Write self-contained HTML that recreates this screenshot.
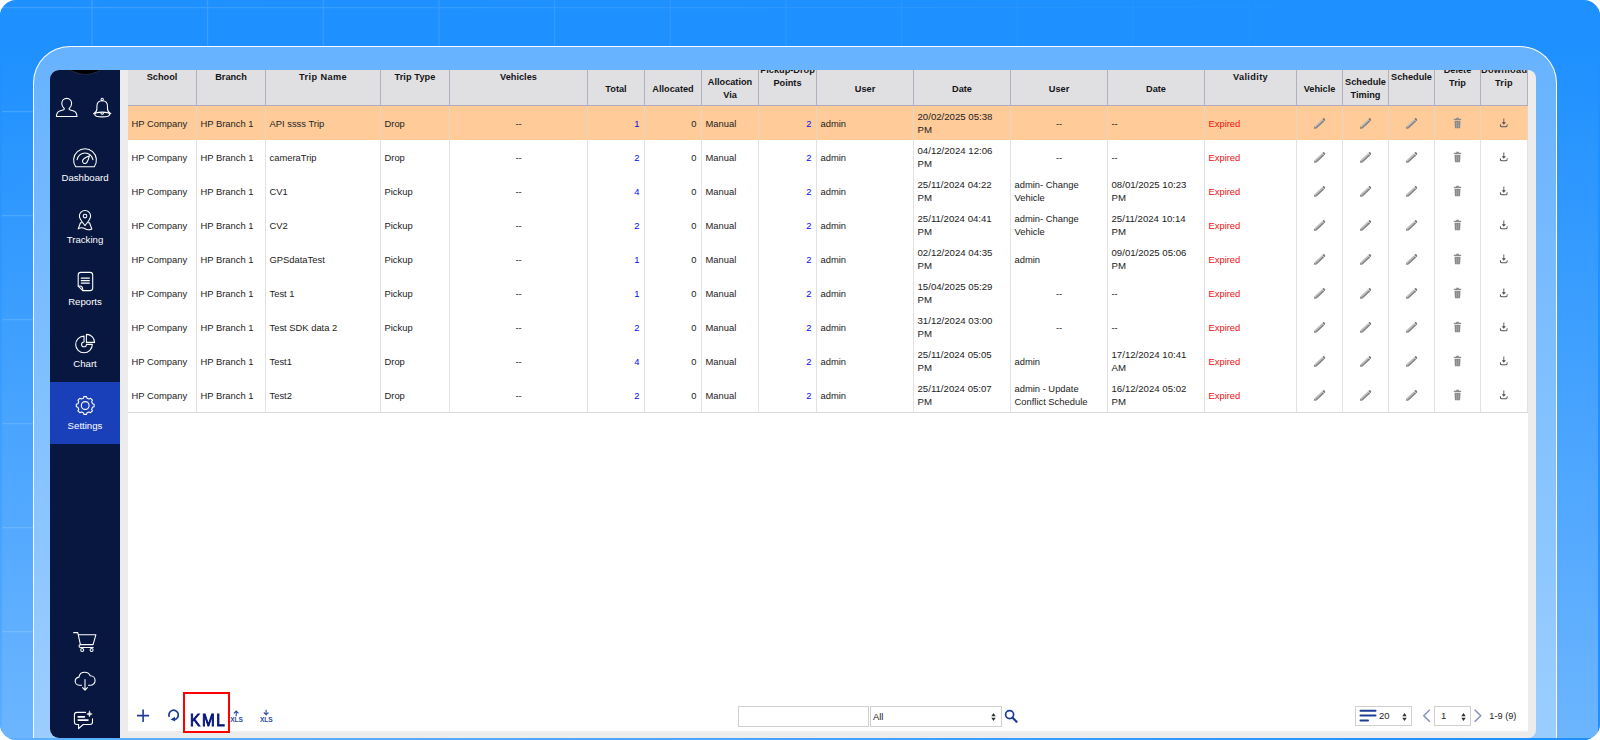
<!DOCTYPE html>
<html lang="en">
<head>
<meta charset="utf-8">
<title>Trip Settings</title>
<style>
*{box-sizing:border-box;margin:0;padding:0}
html,body{width:1600px;height:740px;overflow:hidden;background:#fff}
body{font-family:"Liberation Sans",sans-serif;position:relative;color:#222}
#bg{position:absolute;left:0;top:0;width:1600px;height:740px;border-radius:16px;overflow:hidden;
 background:linear-gradient(180deg,#1e90ff 0%,#1e90ff 6%,#6cb5ff 100%)}
#bg i{position:absolute;display:block}
#eb{left:0;bottom:0;width:1600px;height:2.2px;background:linear-gradient(90deg,#5caeff 0,#58acff 25%,#1e90ff 94%)}
#er{right:0;top:0;width:2.2px;height:740px;background:#1e90ff}
#el{left:0;top:0;width:2px;height:740px;background:linear-gradient(180deg,#1e90ff 0,#1e90ff 10%,#4ea7ff 85%,#5caeff 100%)}
#grid{position:absolute;left:0;top:0;width:1600px;height:740px;display:block;
 -webkit-mask-image:linear-gradient(90deg,#000 0,#000 6%,transparent 90%);
 mask-image:linear-gradient(90deg,#000 0,#000 6%,transparent 90%)}
#frame{position:absolute;left:32.5px;top:45.5px;width:1524px;height:692.5px;
 border:1.3px solid #fff;border-bottom:0;border-radius:37px 37px 0 0;
 background:linear-gradient(180deg,#67b2ff 0%,#9bceff 100%)}
#app{position:absolute;left:50px;top:70px;width:1485.5px;height:667.5px;border-radius:9px 8px 8px 9px;overflow:hidden;background:#ececec}
#side{position:absolute;left:0;top:0;width:70px;height:100%;background:#07173f;color:#fff}
#logo{position:absolute;left:6.5px;top:-52.600px;width:57px;height:57px;border-radius:50%;background:#000;box-shadow:0 0 0 .6px #2a3350}
.sico{position:absolute;display:block;overflow:visible}
.sico *{fill:none;stroke:#fff;stroke-width:1.08;stroke-linecap:round;stroke-linejoin:round}
.nav{position:absolute;left:0;width:70px;height:62px}
.nav.on{background:#1a40b9}
.nav span{position:absolute;left:0;width:70px;text-align:center;top:37.5px;font-size:9.65px;line-height:12px;color:#fff}
#content{position:absolute;left:78px;top:0;width:1400px;height:661px;background:#fff}
#hdr{position:absolute;left:0;top:0;width:1400px;height:36px;background:#e0e0e3;border-bottom:1px solid #adadbc;overflow:hidden}
.th{position:absolute;top:0;height:35px;border-right:1px solid #b0b0bf;font-weight:bold;font-size:9.2px;line-height:13px;text-align:center;color:#141416;white-space:nowrap}
.th span{position:absolute;left:0;width:100%;display:block}
table{position:absolute;left:0;top:36px;width:1400px;border-collapse:separate;border-spacing:0;table-layout:fixed;border-bottom:1px solid #d9d9d9}
td{height:34px;border-right:1px solid #e2e2e2;font-size:9.4px;line-height:13px;padding:0 0 0 3.5px;vertical-align:middle;color:#222;overflow:hidden}
tr.sel td{background:#ffcc99;border-right-color:#e6d6c6}
td.c{text-align:center;padding-left:0}
td.r{text-align:right;padding-right:4.5px}
td.d{font-size:9.65px}
td.b{color:#0808f8}
td.x{color:#f01010}
td.i{text-align:center;padding:0;line-height:0}
td.i svg{display:inline-block;vertical-align:middle}
#foot{position:absolute;left:0;top:630px;width:1400px;height:31px}
.tb{position:absolute;display:block;overflow:visible;z-index:3;pointer-events:none}
.box{position:absolute;border:1px solid #d0d0d0;background:#fff;height:20px;font-size:9.4px;line-height:18px;color:#222}
.ud{position:absolute;top:5.5px;width:5px;height:8px}
#kml{position:absolute;left:183px;top:692px;width:47px;height:41px;border:2px solid #ff0000;background:#fff}
#kml b{position:absolute;left:5.3px;top:16.6px;font-size:17px;line-height:20px;color:#001478;letter-spacing:1.9px;font-weight:normal;-webkit-text-stroke:.95px #001478;transform:scaleX(.9);transform-origin:0 0}
.xls{position:absolute;font-size:6.6px;font-weight:bold;color:#2a4ba0;line-height:7px;letter-spacing:-.1px}
#pg{position:absolute;font-size:9.2px;line-height:12px;color:#222}
</style>
</head>
<body>
<div id="bg"><svg id="grid" width="1600" height="740" viewBox="0 0 1600 740"><path d="M91.90 0V740M207.57 0V740M323.24 0V740M438.91 0V740M554.58 0V740M670.25 0V740M785.92 0V740M901.59 0V740M1017.26 0V740M1132.93 0V740M1248.60 0V740M1364.27 0V740M1479.94 0V740M1595.61 0V740M0 7.70H1600M0 111.70H1600M0 215.70H1600M0 319.70H1600M0 423.70H1600M0 527.70H1600M0 631.70H1600" fill="none" stroke="#fff" stroke-opacity=".14" stroke-width="1.300"/></svg><i id="el"></i><i id="er"></i><i id="eb"></i></div>
<div id="frame"></div>
<div id="app">
 <div id="side">
  <div id="logo"></div>
<div class="nav" style="top:64px"><span>Dashboard</span></div>
<div class="nav" style="top:126px"><span>Tracking</span></div>
<div class="nav" style="top:188px"><span>Reports</span></div>
<div class="nav" style="top:250px"><span>Chart</span></div>
<div class="nav on" style="top:312px"><span>Settings</span></div>

<svg class="sico" style="left:0;top:0" width="70" height="668" viewBox="50 70 70 668">
<!-- user -->
<path d="M66.7 98.4c-2.9 0-4.9 2.3-4.9 5.100 0 2.100 1 3.800 2.200 4.700.5.400.4 1.300-.3 1.500l-4 1.200c-2 .6-3.100 2.400-3.300 5.600h20.600c-.2-3.200-1.300-5-3.300-5.600l-4-1.200c-.7-.2-.8-1.100-.3-1.500 1.200-.9 2.200-2.600 2.200-4.700 0-2.800-2-5.100-4.900-5.100z"/>
<!-- bell -->
<circle cx="102.2" cy="99.400" r="1.150"/>
<path d="M102.200 100.800c-3.200 0-5.300 2.300-5.300 5.600v2.300c0 2.300-.9 3.700-3.300 5.100"/>
<path d="M102.200 100.800c3.200 0 5.300 2.300 5.300 5.600v2.300c0 2.300.9 3.700 3.300 5.100"/>
<ellipse cx="102.200" cy="114.500" rx="7.400" ry="2.400"/>
<path d="M100.900 112.900c.2 1 .7 1.400 1.300 1.400s1.100-.4 1.300-1.400"/>
<!-- dashboard -->
<path d="M75.700 166.800a11.400 11.400 0 1 1 18.600 0z"/>
<path d="M77.100 159.700a8 8 0 0 1 15.800 0"/>
<path d="M89.500 155.700c-1.900.8-5.400 2.600-6.400 3.900-.9 1.200-.7 2.700.4 3.500 1.100.8 2.600.5 3.400-.7.900-1.300 2.100-4.800 2.600-6.700z"/>
<!-- tracking -->
<path d="M85 225.600c-1.800-2.600-5.600-6.200-5.600-9.600 0-3.100 2.500-5.500 5.600-5.500s5.600 2.400 5.600 5.500c0 3.400-3.800 7-5.600 9.600z"/>
<circle cx="85" cy="216.100" r="1.800"/>
<path d="M81.900 222.700h-1.400l-2.300 6.200c2.300-1.500 4.500-1.500 6.800-.2s4.500 1.300 6.800.2l-2.300-6.200h-1.400"/>
<!-- reports -->
<path d="M80.800 272.400h9.300c1.500 0 2.600 1.100 2.600 2.600v13c0 1.500-1.100 2.600-2.600 2.600h-7.300l-4.600-4.400v-11.200c0-1.500 1.100-2.600 2.600-2.600z"/>
<path d="M78.200 286.200c1.700-.5 3.200-.2 3.900.9.600.9.700 2.100.7 3.500"/>
<path d="M81.300 278.100h8M81.300 280.600h8M81.300 283.100h8" style="stroke-width:1.300"/>
<!-- chart -->
<path d="M84 336.100a8.300 8.300 0 1 0 8.300 8.300h-5.900a2.400 2.400 0 1 1-2.400-2.400z"/>
<path d="M86.400 334.400v8h8.200a8.200 8.200 0 0 0-8.200-8z"/>
<!-- settings gear -->
<circle cx="85.200" cy="405.500" r="3.900"/>
<path d="M83.86 396.60 L86.54 396.60 L87.01 398.22 L89.07 399.07 L90.55 398.26 L92.44 400.15 L91.63 401.63 L92.48 403.69 L94.10 404.16 L94.10 406.84 L92.48 407.31 L91.63 409.37 L92.44 410.85 L90.55 412.74 L89.07 411.93 L87.01 412.78 L86.54 414.40 L83.86 414.40 L83.39 412.78 L81.33 411.93 L79.85 412.74 L77.96 410.85 L78.77 409.37 L77.92 407.31 L76.30 406.84 L76.30 404.16 L77.92 403.69 L78.77 401.63 L77.96 400.15 L79.85 398.26 L81.33 399.07 L83.39 398.22Z" style="stroke-linejoin:round"/>
<!-- cart -->
<path d="M73.600 632.600h4.200l2.600 12h12.700l2.800-9.900h-17.400"/>
<path d="M80.400 644.600c-1 .2-1.400.8-1.400 1.500 0 .8.600 1.400 1.600 1.400h12.600"/>
<circle cx="82.200" cy="650" r="1.500"/><circle cx="91.600" cy="650" r="1.500"/>
<!-- cloud download -->
<path d="M81.500 685.300h-1.800c-2.500 0-4.500-1.800-4.500-4.100 0-2.100 1.600-3.800 3.800-4.100.4-2.800 2.800-4.900 5.800-4.900 2.500 0 4.600 1.500 5.400 3.600 2.800.1 4.900 2.100 4.900 4.700s-2.100 4.800-4.900 4.800h-1.700"/>
<path d="M85 679.500v10.300M82.600 687.600l2.400 2.600 2.400-2.600"/>
<!-- chat sparkle -->
<path d="M85.500 712.400h-8.600c-1.500 0-2.500 1-2.500 2.500v7.100c0 1.500 1 2.500 2.500 2.500h1.700v4.200l4.600-4.200h6.800c1.500 0 2.500-1 2.500-2.500v-3.300"/>
<path d="M78.200 716.900h6.200M78.200 720.100h9.800" style="stroke-width:1.600"/>
<path d="M89.500 711.200c.3 1.800.9 2.500 2.700 2.800-1.800.3-2.400 1-2.700 2.800-.3-1.800-.9-2.500-2.700-2.800 1.800-.3 2.400-1 2.700-2.800z" style="fill:#fff;stroke-width:.6"/>
</svg>

 </div>
 <div id="content">
  <div id="hdr"><div class="th" style="left:0px;width:69px"><span style="top:0.5px">School</span></div><div class="th" style="left:69px;width:69px"><span style="top:0.5px">Branch</span></div><div class="th" style="left:138px;width:115px"><span style="top:0.5px;letter-spacing:0.42px">Trip Name</span></div><div class="th" style="left:253px;width:69px"><span style="top:0.5px;letter-spacing:0.1px">Trip Type</span></div><div class="th" style="left:322px;width:138px"><span style="top:0.5px">Vehicles</span></div><div class="th" style="left:460px;width:57px"><span style="top:12.7px">Total</span></div><div class="th" style="left:517px;width:57px"><span style="top:12.7px">Allocated</span></div><div class="th" style="left:574px;width:57px"><span style="top:6px">Allocation<br>Via</span></div><div class="th" style="left:631px;width:58px"><span style="top:-6.5px">Pickup-Drop<br>Points</span></div><div class="th" style="left:689px;width:97px"><span style="top:12.7px">User</span></div><div class="th" style="left:786px;width:97px"><span style="top:12.7px">Date</span></div><div class="th" style="left:883px;width:97px"><span style="top:12.7px">User</span></div><div class="th" style="left:980px;width:97px"><span style="top:12.7px">Date</span></div><div class="th" style="left:1077px;width:92px"><span style="top:0.5px;letter-spacing:0.36px">Validity</span></div><div class="th" style="left:1169px;width:46px"><span style="top:12.7px">Vehicle</span></div><div class="th" style="left:1215px;width:46px"><span style="top:6px">Schedule<br>Timing</span></div><div class="th" style="left:1261px;width:46px"><span style="top:0.5px">Schedule</span></div><div class="th" style="left:1307px;width:46px"><span style="top:-6.5px">Delete<br>Trip</span></div><div class="th" style="left:1353px;width:47px"><span style="top:-6.5px;letter-spacing:0.3px">Download<br>Trip</span></div></div>
  <table><colgroup><col style="width:69px"><col style="width:69px"><col style="width:115px"><col style="width:69px"><col style="width:138px"><col style="width:57px"><col style="width:57px"><col style="width:57px"><col style="width:58px"><col style="width:97px"><col style="width:97px"><col style="width:97px"><col style="width:97px"><col style="width:92px"><col style="width:46px"><col style="width:46px"><col style="width:46px"><col style="width:46px"><col style="width:47px"></colgroup>
<tr class="sel"><td>HP Company</td><td>HP Branch 1</td><td>API ssss Trip</td><td>Drop</td><td class="c">--</td><td class="r b">1</td><td class="r">0</td><td>Manual</td><td class="r b">2</td><td>admin</td><td class="d">20/02/2025 05:38<br>PM</td><td class="c">--</td><td>--</td><td class="x">Expired</td><td class="i"><svg width="12" height="12" viewBox="0 0 12 12" style="transform:translate(-.7px,.6px)"><g transform="translate(6.050 6.150) rotate(-43)"><path d="M-7.300 0l2.100-1.550v3.100z" fill="#777"/><path d="M-5.200-1.550h10.300v1.550h-10.300z" fill="#bcbcbc"/><path d="M-5.200 0h10.300v1.550h-10.300z" fill="#838383"/><rect x="5.400" y="-1.550" width="1.900" height="3.100" rx=".8" fill="#7a7a7a"/></g></svg></td><td class="i"><svg width="12" height="12" viewBox="0 0 12 12" style="transform:translate(-.7px,.6px)"><g transform="translate(6.050 6.150) rotate(-43)"><path d="M-7.300 0l2.100-1.550v3.100z" fill="#777"/><path d="M-5.200-1.550h10.300v1.550h-10.300z" fill="#bcbcbc"/><path d="M-5.200 0h10.300v1.550h-10.300z" fill="#838383"/><rect x="5.400" y="-1.550" width="1.900" height="3.100" rx=".8" fill="#7a7a7a"/></g></svg></td><td class="i"><svg width="12" height="12" viewBox="0 0 12 12" style="transform:translate(-.7px,.6px)"><g transform="translate(6.050 6.150) rotate(-43)"><path d="M-7.300 0l2.100-1.550v3.100z" fill="#777"/><path d="M-5.200-1.550h10.300v1.550h-10.300z" fill="#bcbcbc"/><path d="M-5.200 0h10.300v1.550h-10.300z" fill="#838383"/><rect x="5.400" y="-1.550" width="1.900" height="3.100" rx=".8" fill="#7a7a7a"/></g></svg></td><td class="i"><svg width="8" height="11" viewBox="0 0 8 11" style="transform:translate(-.5px,-.4px)"><path d="M2.700 0h2.600v1.100h2.200c.2 0 .4.200.4.400v.500c0 .2-.2.400-.4.400h-7c-.2 0-.4-.2-.4-.4v-.500c0-.2.200-.4.400-.4h2.200zM1 3.100h6l-.4 7.300c0 .3-.3.600-.6.600h-4c-.3 0-.6-.3-.6-.6z" fill="#898989"/><path d="M3.050 4v6M4.950 4v6" stroke="#b5b5b5" stroke-width=".55" fill="none"/></svg></td><td class="i"><svg width="8.300" height="9.200" viewBox="0 0 9 10" style="transform:translate(-.3px,0px)"><path d="M4.450.5v5.200" fill="none" stroke="#666" stroke-width="1.100"/><path d="M2.200 4.700h4.500l-2.250 2.600z" fill="#4f4f4f"/><path d="M.65 6.900v1.100c0 1 .5 1.500 1.500 1.500h4.600c1 0 1.500-.5 1.500-1.500v-1.100" fill="none" stroke="#555" stroke-width="1.200" stroke-linejoin="round"/></svg></td></tr>
<tr><td>HP Company</td><td>HP Branch 1</td><td>cameraTrip</td><td>Drop</td><td class="c">--</td><td class="r b">2</td><td class="r">0</td><td>Manual</td><td class="r b">2</td><td>admin</td><td class="d">04/12/2024 12:06<br>PM</td><td class="c">--</td><td>--</td><td class="x">Expired</td><td class="i"><svg width="12" height="12" viewBox="0 0 12 12" style="transform:translate(-.7px,.6px)"><g transform="translate(6.050 6.150) rotate(-43)"><path d="M-7.300 0l2.100-1.550v3.100z" fill="#777"/><path d="M-5.200-1.550h10.300v1.550h-10.300z" fill="#bcbcbc"/><path d="M-5.200 0h10.300v1.550h-10.300z" fill="#838383"/><rect x="5.400" y="-1.550" width="1.900" height="3.100" rx=".8" fill="#7a7a7a"/></g></svg></td><td class="i"><svg width="12" height="12" viewBox="0 0 12 12" style="transform:translate(-.7px,.6px)"><g transform="translate(6.050 6.150) rotate(-43)"><path d="M-7.300 0l2.100-1.550v3.100z" fill="#777"/><path d="M-5.200-1.550h10.300v1.550h-10.300z" fill="#bcbcbc"/><path d="M-5.200 0h10.300v1.550h-10.300z" fill="#838383"/><rect x="5.400" y="-1.550" width="1.900" height="3.100" rx=".8" fill="#7a7a7a"/></g></svg></td><td class="i"><svg width="12" height="12" viewBox="0 0 12 12" style="transform:translate(-.7px,.6px)"><g transform="translate(6.050 6.150) rotate(-43)"><path d="M-7.300 0l2.100-1.550v3.100z" fill="#777"/><path d="M-5.200-1.550h10.300v1.550h-10.300z" fill="#bcbcbc"/><path d="M-5.200 0h10.300v1.550h-10.300z" fill="#838383"/><rect x="5.400" y="-1.550" width="1.900" height="3.100" rx=".8" fill="#7a7a7a"/></g></svg></td><td class="i"><svg width="8" height="11" viewBox="0 0 8 11" style="transform:translate(-.5px,-.4px)"><path d="M2.700 0h2.600v1.100h2.200c.2 0 .4.200.4.400v.500c0 .2-.2.400-.4.400h-7c-.2 0-.4-.2-.4-.4v-.500c0-.2.200-.4.400-.4h2.200zM1 3.100h6l-.4 7.300c0 .3-.3.600-.6.600h-4c-.3 0-.6-.3-.6-.6z" fill="#898989"/><path d="M3.050 4v6M4.950 4v6" stroke="#b5b5b5" stroke-width=".55" fill="none"/></svg></td><td class="i"><svg width="8.300" height="9.200" viewBox="0 0 9 10" style="transform:translate(-.3px,0px)"><path d="M4.450.5v5.200" fill="none" stroke="#666" stroke-width="1.100"/><path d="M2.200 4.700h4.500l-2.250 2.600z" fill="#4f4f4f"/><path d="M.65 6.900v1.100c0 1 .5 1.500 1.500 1.500h4.600c1 0 1.500-.5 1.500-1.500v-1.100" fill="none" stroke="#555" stroke-width="1.200" stroke-linejoin="round"/></svg></td></tr>
<tr><td>HP Company</td><td>HP Branch 1</td><td>CV1</td><td>Pickup</td><td class="c">--</td><td class="r b">4</td><td class="r">0</td><td>Manual</td><td class="r b">2</td><td>admin</td><td class="d">25/11/2024 04:22<br>PM</td><td>admin- Change<br>Vehicle</td><td class="d">08/01/2025 10:23<br>PM</td><td class="x">Expired</td><td class="i"><svg width="12" height="12" viewBox="0 0 12 12" style="transform:translate(-.7px,.6px)"><g transform="translate(6.050 6.150) rotate(-43)"><path d="M-7.300 0l2.100-1.550v3.100z" fill="#777"/><path d="M-5.200-1.550h10.300v1.550h-10.300z" fill="#bcbcbc"/><path d="M-5.200 0h10.300v1.550h-10.300z" fill="#838383"/><rect x="5.400" y="-1.550" width="1.900" height="3.100" rx=".8" fill="#7a7a7a"/></g></svg></td><td class="i"><svg width="12" height="12" viewBox="0 0 12 12" style="transform:translate(-.7px,.6px)"><g transform="translate(6.050 6.150) rotate(-43)"><path d="M-7.300 0l2.100-1.550v3.100z" fill="#777"/><path d="M-5.200-1.550h10.300v1.550h-10.300z" fill="#bcbcbc"/><path d="M-5.200 0h10.300v1.550h-10.300z" fill="#838383"/><rect x="5.400" y="-1.550" width="1.900" height="3.100" rx=".8" fill="#7a7a7a"/></g></svg></td><td class="i"><svg width="12" height="12" viewBox="0 0 12 12" style="transform:translate(-.7px,.6px)"><g transform="translate(6.050 6.150) rotate(-43)"><path d="M-7.300 0l2.100-1.550v3.100z" fill="#777"/><path d="M-5.200-1.550h10.300v1.550h-10.300z" fill="#bcbcbc"/><path d="M-5.200 0h10.300v1.550h-10.300z" fill="#838383"/><rect x="5.400" y="-1.550" width="1.900" height="3.100" rx=".8" fill="#7a7a7a"/></g></svg></td><td class="i"><svg width="8" height="11" viewBox="0 0 8 11" style="transform:translate(-.5px,-.4px)"><path d="M2.700 0h2.600v1.100h2.200c.2 0 .4.200.4.400v.500c0 .2-.2.400-.4.400h-7c-.2 0-.4-.2-.4-.4v-.500c0-.2.200-.4.400-.4h2.200zM1 3.100h6l-.4 7.300c0 .3-.3.600-.6.600h-4c-.3 0-.6-.3-.6-.6z" fill="#898989"/><path d="M3.050 4v6M4.950 4v6" stroke="#b5b5b5" stroke-width=".55" fill="none"/></svg></td><td class="i"><svg width="8.300" height="9.200" viewBox="0 0 9 10" style="transform:translate(-.3px,0px)"><path d="M4.450.5v5.200" fill="none" stroke="#666" stroke-width="1.100"/><path d="M2.200 4.700h4.500l-2.250 2.600z" fill="#4f4f4f"/><path d="M.65 6.900v1.100c0 1 .5 1.500 1.500 1.500h4.600c1 0 1.500-.5 1.500-1.500v-1.100" fill="none" stroke="#555" stroke-width="1.200" stroke-linejoin="round"/></svg></td></tr>
<tr><td>HP Company</td><td>HP Branch 1</td><td>CV2</td><td>Pickup</td><td class="c">--</td><td class="r b">2</td><td class="r">0</td><td>Manual</td><td class="r b">2</td><td>admin</td><td class="d">25/11/2024 04:41<br>PM</td><td>admin- Change<br>Vehicle</td><td class="d">25/11/2024 10:14<br>PM</td><td class="x">Expired</td><td class="i"><svg width="12" height="12" viewBox="0 0 12 12" style="transform:translate(-.7px,.6px)"><g transform="translate(6.050 6.150) rotate(-43)"><path d="M-7.300 0l2.100-1.550v3.100z" fill="#777"/><path d="M-5.200-1.550h10.300v1.550h-10.300z" fill="#bcbcbc"/><path d="M-5.200 0h10.300v1.550h-10.300z" fill="#838383"/><rect x="5.400" y="-1.550" width="1.900" height="3.100" rx=".8" fill="#7a7a7a"/></g></svg></td><td class="i"><svg width="12" height="12" viewBox="0 0 12 12" style="transform:translate(-.7px,.6px)"><g transform="translate(6.050 6.150) rotate(-43)"><path d="M-7.300 0l2.100-1.550v3.100z" fill="#777"/><path d="M-5.200-1.550h10.300v1.550h-10.300z" fill="#bcbcbc"/><path d="M-5.200 0h10.300v1.550h-10.300z" fill="#838383"/><rect x="5.400" y="-1.550" width="1.900" height="3.100" rx=".8" fill="#7a7a7a"/></g></svg></td><td class="i"><svg width="12" height="12" viewBox="0 0 12 12" style="transform:translate(-.7px,.6px)"><g transform="translate(6.050 6.150) rotate(-43)"><path d="M-7.300 0l2.100-1.550v3.100z" fill="#777"/><path d="M-5.200-1.550h10.300v1.550h-10.300z" fill="#bcbcbc"/><path d="M-5.200 0h10.300v1.550h-10.300z" fill="#838383"/><rect x="5.400" y="-1.550" width="1.900" height="3.100" rx=".8" fill="#7a7a7a"/></g></svg></td><td class="i"><svg width="8" height="11" viewBox="0 0 8 11" style="transform:translate(-.5px,-.4px)"><path d="M2.700 0h2.600v1.100h2.200c.2 0 .4.200.4.400v.500c0 .2-.2.400-.4.400h-7c-.2 0-.4-.2-.4-.4v-.500c0-.2.200-.4.400-.4h2.200zM1 3.100h6l-.4 7.300c0 .3-.3.600-.6.600h-4c-.3 0-.6-.3-.6-.6z" fill="#898989"/><path d="M3.050 4v6M4.950 4v6" stroke="#b5b5b5" stroke-width=".55" fill="none"/></svg></td><td class="i"><svg width="8.300" height="9.200" viewBox="0 0 9 10" style="transform:translate(-.3px,0px)"><path d="M4.450.5v5.200" fill="none" stroke="#666" stroke-width="1.100"/><path d="M2.200 4.700h4.500l-2.250 2.600z" fill="#4f4f4f"/><path d="M.65 6.900v1.100c0 1 .5 1.500 1.500 1.500h4.600c1 0 1.500-.5 1.500-1.500v-1.100" fill="none" stroke="#555" stroke-width="1.200" stroke-linejoin="round"/></svg></td></tr>
<tr><td>HP Company</td><td>HP Branch 1</td><td>GPSdataTest</td><td>Pickup</td><td class="c">--</td><td class="r b">1</td><td class="r">0</td><td>Manual</td><td class="r b">2</td><td>admin</td><td class="d">02/12/2024 04:35<br>PM</td><td>admin</td><td class="d">09/01/2025 05:06<br>PM</td><td class="x">Expired</td><td class="i"><svg width="12" height="12" viewBox="0 0 12 12" style="transform:translate(-.7px,.6px)"><g transform="translate(6.050 6.150) rotate(-43)"><path d="M-7.300 0l2.100-1.550v3.100z" fill="#777"/><path d="M-5.200-1.550h10.300v1.550h-10.300z" fill="#bcbcbc"/><path d="M-5.200 0h10.300v1.550h-10.300z" fill="#838383"/><rect x="5.400" y="-1.550" width="1.900" height="3.100" rx=".8" fill="#7a7a7a"/></g></svg></td><td class="i"><svg width="12" height="12" viewBox="0 0 12 12" style="transform:translate(-.7px,.6px)"><g transform="translate(6.050 6.150) rotate(-43)"><path d="M-7.300 0l2.100-1.550v3.100z" fill="#777"/><path d="M-5.200-1.550h10.300v1.550h-10.300z" fill="#bcbcbc"/><path d="M-5.200 0h10.300v1.550h-10.300z" fill="#838383"/><rect x="5.400" y="-1.550" width="1.900" height="3.100" rx=".8" fill="#7a7a7a"/></g></svg></td><td class="i"><svg width="12" height="12" viewBox="0 0 12 12" style="transform:translate(-.7px,.6px)"><g transform="translate(6.050 6.150) rotate(-43)"><path d="M-7.300 0l2.100-1.550v3.100z" fill="#777"/><path d="M-5.200-1.550h10.300v1.550h-10.300z" fill="#bcbcbc"/><path d="M-5.200 0h10.300v1.550h-10.300z" fill="#838383"/><rect x="5.400" y="-1.550" width="1.900" height="3.100" rx=".8" fill="#7a7a7a"/></g></svg></td><td class="i"><svg width="8" height="11" viewBox="0 0 8 11" style="transform:translate(-.5px,-.4px)"><path d="M2.700 0h2.600v1.100h2.200c.2 0 .4.200.4.400v.500c0 .2-.2.400-.4.400h-7c-.2 0-.4-.2-.4-.4v-.500c0-.2.200-.4.400-.4h2.200zM1 3.100h6l-.4 7.300c0 .3-.3.600-.6.600h-4c-.3 0-.6-.3-.6-.6z" fill="#898989"/><path d="M3.050 4v6M4.950 4v6" stroke="#b5b5b5" stroke-width=".55" fill="none"/></svg></td><td class="i"><svg width="8.300" height="9.200" viewBox="0 0 9 10" style="transform:translate(-.3px,0px)"><path d="M4.450.5v5.200" fill="none" stroke="#666" stroke-width="1.100"/><path d="M2.200 4.700h4.500l-2.250 2.600z" fill="#4f4f4f"/><path d="M.65 6.900v1.100c0 1 .5 1.500 1.500 1.500h4.600c1 0 1.500-.5 1.500-1.500v-1.100" fill="none" stroke="#555" stroke-width="1.200" stroke-linejoin="round"/></svg></td></tr>
<tr><td>HP Company</td><td>HP Branch 1</td><td>Test 1</td><td>Pickup</td><td class="c">--</td><td class="r b">1</td><td class="r">0</td><td>Manual</td><td class="r b">2</td><td>admin</td><td class="d">15/04/2025 05:29<br>PM</td><td class="c">--</td><td>--</td><td class="x">Expired</td><td class="i"><svg width="12" height="12" viewBox="0 0 12 12" style="transform:translate(-.7px,.6px)"><g transform="translate(6.050 6.150) rotate(-43)"><path d="M-7.300 0l2.100-1.550v3.100z" fill="#777"/><path d="M-5.200-1.550h10.300v1.550h-10.300z" fill="#bcbcbc"/><path d="M-5.200 0h10.300v1.550h-10.300z" fill="#838383"/><rect x="5.400" y="-1.550" width="1.900" height="3.100" rx=".8" fill="#7a7a7a"/></g></svg></td><td class="i"><svg width="12" height="12" viewBox="0 0 12 12" style="transform:translate(-.7px,.6px)"><g transform="translate(6.050 6.150) rotate(-43)"><path d="M-7.300 0l2.100-1.550v3.100z" fill="#777"/><path d="M-5.200-1.550h10.300v1.550h-10.300z" fill="#bcbcbc"/><path d="M-5.200 0h10.300v1.550h-10.300z" fill="#838383"/><rect x="5.400" y="-1.550" width="1.900" height="3.100" rx=".8" fill="#7a7a7a"/></g></svg></td><td class="i"><svg width="12" height="12" viewBox="0 0 12 12" style="transform:translate(-.7px,.6px)"><g transform="translate(6.050 6.150) rotate(-43)"><path d="M-7.300 0l2.100-1.550v3.100z" fill="#777"/><path d="M-5.200-1.550h10.300v1.550h-10.300z" fill="#bcbcbc"/><path d="M-5.200 0h10.300v1.550h-10.300z" fill="#838383"/><rect x="5.400" y="-1.550" width="1.900" height="3.100" rx=".8" fill="#7a7a7a"/></g></svg></td><td class="i"><svg width="8" height="11" viewBox="0 0 8 11" style="transform:translate(-.5px,-.4px)"><path d="M2.700 0h2.600v1.100h2.200c.2 0 .4.200.4.400v.500c0 .2-.2.400-.4.400h-7c-.2 0-.4-.2-.4-.4v-.500c0-.2.200-.4.400-.4h2.200zM1 3.100h6l-.4 7.300c0 .3-.3.600-.6.600h-4c-.3 0-.6-.3-.6-.6z" fill="#898989"/><path d="M3.050 4v6M4.950 4v6" stroke="#b5b5b5" stroke-width=".55" fill="none"/></svg></td><td class="i"><svg width="8.300" height="9.200" viewBox="0 0 9 10" style="transform:translate(-.3px,0px)"><path d="M4.450.5v5.200" fill="none" stroke="#666" stroke-width="1.100"/><path d="M2.200 4.700h4.500l-2.250 2.600z" fill="#4f4f4f"/><path d="M.65 6.900v1.100c0 1 .5 1.500 1.500 1.500h4.600c1 0 1.500-.5 1.500-1.500v-1.100" fill="none" stroke="#555" stroke-width="1.200" stroke-linejoin="round"/></svg></td></tr>
<tr><td>HP Company</td><td>HP Branch 1</td><td>Test SDK data 2</td><td>Pickup</td><td class="c">--</td><td class="r b">2</td><td class="r">0</td><td>Manual</td><td class="r b">2</td><td>admin</td><td class="d">31/12/2024 03:00<br>PM</td><td class="c">--</td><td>--</td><td class="x">Expired</td><td class="i"><svg width="12" height="12" viewBox="0 0 12 12" style="transform:translate(-.7px,.6px)"><g transform="translate(6.050 6.150) rotate(-43)"><path d="M-7.300 0l2.100-1.550v3.100z" fill="#777"/><path d="M-5.200-1.550h10.300v1.550h-10.300z" fill="#bcbcbc"/><path d="M-5.200 0h10.300v1.550h-10.300z" fill="#838383"/><rect x="5.400" y="-1.550" width="1.900" height="3.100" rx=".8" fill="#7a7a7a"/></g></svg></td><td class="i"><svg width="12" height="12" viewBox="0 0 12 12" style="transform:translate(-.7px,.6px)"><g transform="translate(6.050 6.150) rotate(-43)"><path d="M-7.300 0l2.100-1.550v3.100z" fill="#777"/><path d="M-5.200-1.550h10.300v1.550h-10.300z" fill="#bcbcbc"/><path d="M-5.200 0h10.300v1.550h-10.300z" fill="#838383"/><rect x="5.400" y="-1.550" width="1.900" height="3.100" rx=".8" fill="#7a7a7a"/></g></svg></td><td class="i"><svg width="12" height="12" viewBox="0 0 12 12" style="transform:translate(-.7px,.6px)"><g transform="translate(6.050 6.150) rotate(-43)"><path d="M-7.300 0l2.100-1.550v3.100z" fill="#777"/><path d="M-5.200-1.550h10.300v1.550h-10.300z" fill="#bcbcbc"/><path d="M-5.200 0h10.300v1.550h-10.300z" fill="#838383"/><rect x="5.400" y="-1.550" width="1.900" height="3.100" rx=".8" fill="#7a7a7a"/></g></svg></td><td class="i"><svg width="8" height="11" viewBox="0 0 8 11" style="transform:translate(-.5px,-.4px)"><path d="M2.700 0h2.600v1.100h2.200c.2 0 .4.200.4.400v.500c0 .2-.2.400-.4.400h-7c-.2 0-.4-.2-.4-.4v-.500c0-.2.200-.4.400-.4h2.200zM1 3.100h6l-.4 7.300c0 .3-.3.600-.6.600h-4c-.3 0-.6-.3-.6-.6z" fill="#898989"/><path d="M3.050 4v6M4.950 4v6" stroke="#b5b5b5" stroke-width=".55" fill="none"/></svg></td><td class="i"><svg width="8.300" height="9.200" viewBox="0 0 9 10" style="transform:translate(-.3px,0px)"><path d="M4.450.5v5.200" fill="none" stroke="#666" stroke-width="1.100"/><path d="M2.200 4.700h4.500l-2.250 2.600z" fill="#4f4f4f"/><path d="M.65 6.900v1.100c0 1 .5 1.500 1.500 1.500h4.600c1 0 1.500-.5 1.500-1.500v-1.100" fill="none" stroke="#555" stroke-width="1.200" stroke-linejoin="round"/></svg></td></tr>
<tr><td>HP Company</td><td>HP Branch 1</td><td>Test1</td><td>Drop</td><td class="c">--</td><td class="r b">4</td><td class="r">0</td><td>Manual</td><td class="r b">2</td><td>admin</td><td class="d">25/11/2024 05:05<br>PM</td><td>admin</td><td class="d">17/12/2024 10:41<br>AM</td><td class="x">Expired</td><td class="i"><svg width="12" height="12" viewBox="0 0 12 12" style="transform:translate(-.7px,.6px)"><g transform="translate(6.050 6.150) rotate(-43)"><path d="M-7.300 0l2.100-1.550v3.100z" fill="#777"/><path d="M-5.200-1.550h10.300v1.550h-10.300z" fill="#bcbcbc"/><path d="M-5.200 0h10.300v1.550h-10.300z" fill="#838383"/><rect x="5.400" y="-1.550" width="1.900" height="3.100" rx=".8" fill="#7a7a7a"/></g></svg></td><td class="i"><svg width="12" height="12" viewBox="0 0 12 12" style="transform:translate(-.7px,.6px)"><g transform="translate(6.050 6.150) rotate(-43)"><path d="M-7.300 0l2.100-1.550v3.100z" fill="#777"/><path d="M-5.200-1.550h10.300v1.550h-10.300z" fill="#bcbcbc"/><path d="M-5.200 0h10.300v1.550h-10.300z" fill="#838383"/><rect x="5.400" y="-1.550" width="1.900" height="3.100" rx=".8" fill="#7a7a7a"/></g></svg></td><td class="i"><svg width="12" height="12" viewBox="0 0 12 12" style="transform:translate(-.7px,.6px)"><g transform="translate(6.050 6.150) rotate(-43)"><path d="M-7.300 0l2.100-1.550v3.100z" fill="#777"/><path d="M-5.200-1.550h10.300v1.550h-10.300z" fill="#bcbcbc"/><path d="M-5.200 0h10.300v1.550h-10.300z" fill="#838383"/><rect x="5.400" y="-1.550" width="1.900" height="3.100" rx=".8" fill="#7a7a7a"/></g></svg></td><td class="i"><svg width="8" height="11" viewBox="0 0 8 11" style="transform:translate(-.5px,-.4px)"><path d="M2.700 0h2.600v1.100h2.200c.2 0 .4.200.4.400v.500c0 .2-.2.400-.4.400h-7c-.2 0-.4-.2-.4-.4v-.500c0-.2.200-.4.400-.4h2.200zM1 3.100h6l-.4 7.300c0 .3-.3.600-.6.600h-4c-.3 0-.6-.3-.6-.6z" fill="#898989"/><path d="M3.050 4v6M4.950 4v6" stroke="#b5b5b5" stroke-width=".55" fill="none"/></svg></td><td class="i"><svg width="8.300" height="9.200" viewBox="0 0 9 10" style="transform:translate(-.3px,0px)"><path d="M4.450.5v5.200" fill="none" stroke="#666" stroke-width="1.100"/><path d="M2.200 4.700h4.500l-2.250 2.600z" fill="#4f4f4f"/><path d="M.65 6.900v1.100c0 1 .5 1.500 1.500 1.500h4.600c1 0 1.500-.5 1.500-1.500v-1.100" fill="none" stroke="#555" stroke-width="1.200" stroke-linejoin="round"/></svg></td></tr>
<tr><td>HP Company</td><td>HP Branch 1</td><td>Test2</td><td>Drop</td><td class="c">--</td><td class="r b">2</td><td class="r">0</td><td>Manual</td><td class="r b">2</td><td>admin</td><td class="d">25/11/2024 05:07<br>PM</td><td>admin - Update<br>Conflict Schedule</td><td class="d">16/12/2024 05:02<br>PM</td><td class="x">Expired</td><td class="i"><svg width="12" height="12" viewBox="0 0 12 12" style="transform:translate(-.7px,.6px)"><g transform="translate(6.050 6.150) rotate(-43)"><path d="M-7.300 0l2.100-1.550v3.100z" fill="#777"/><path d="M-5.200-1.550h10.300v1.550h-10.300z" fill="#bcbcbc"/><path d="M-5.200 0h10.300v1.550h-10.300z" fill="#838383"/><rect x="5.400" y="-1.550" width="1.900" height="3.100" rx=".8" fill="#7a7a7a"/></g></svg></td><td class="i"><svg width="12" height="12" viewBox="0 0 12 12" style="transform:translate(-.7px,.6px)"><g transform="translate(6.050 6.150) rotate(-43)"><path d="M-7.300 0l2.100-1.550v3.100z" fill="#777"/><path d="M-5.200-1.550h10.300v1.550h-10.300z" fill="#bcbcbc"/><path d="M-5.200 0h10.300v1.550h-10.300z" fill="#838383"/><rect x="5.400" y="-1.550" width="1.900" height="3.100" rx=".8" fill="#7a7a7a"/></g></svg></td><td class="i"><svg width="12" height="12" viewBox="0 0 12 12" style="transform:translate(-.7px,.6px)"><g transform="translate(6.050 6.150) rotate(-43)"><path d="M-7.300 0l2.100-1.550v3.100z" fill="#777"/><path d="M-5.200-1.550h10.300v1.550h-10.300z" fill="#bcbcbc"/><path d="M-5.200 0h10.300v1.550h-10.300z" fill="#838383"/><rect x="5.400" y="-1.550" width="1.900" height="3.100" rx=".8" fill="#7a7a7a"/></g></svg></td><td class="i"><svg width="8" height="11" viewBox="0 0 8 11" style="transform:translate(-.5px,-.4px)"><path d="M2.700 0h2.600v1.100h2.200c.2 0 .4.200.4.400v.500c0 .2-.2.400-.4.400h-7c-.2 0-.4-.2-.4-.4v-.500c0-.2.200-.4.400-.4h2.200zM1 3.100h6l-.4 7.300c0 .3-.3.600-.6.600h-4c-.3 0-.6-.3-.6-.6z" fill="#898989"/><path d="M3.050 4v6M4.950 4v6" stroke="#b5b5b5" stroke-width=".55" fill="none"/></svg></td><td class="i"><svg width="8.300" height="9.200" viewBox="0 0 9 10" style="transform:translate(-.3px,0px)"><path d="M4.450.5v5.200" fill="none" stroke="#666" stroke-width="1.100"/><path d="M2.200 4.700h4.500l-2.250 2.600z" fill="#4f4f4f"/><path d="M.65 6.900v1.100c0 1 .5 1.500 1.500 1.500h4.600c1 0 1.500-.5 1.500-1.500v-1.100" fill="none" stroke="#555" stroke-width="1.200" stroke-linejoin="round"/></svg></td></tr>
  </table>
  <div id="foot">
<svg class="tb" style="left:0;top:0" width="1400" height="31" viewBox="128 700 1400 31">
 <path d="M137 715.600h12.100M143.100 709.400v12.500" stroke="#1e3c96" stroke-width="1.600" fill="none"/>
 <path d="M169.300 716.800a4.700 4.700 0 1 1 5.300 2.700" stroke="#1e3c96" stroke-width="1.700" fill="none"/>
 <path d="M170.500 719.400l4.300-2.700.5 4.700z" fill="#1e3c96"/>
 <path d="M236.200 716.200v-4.800M233.900 713.400l2.300-2.300 2.300 2.300" stroke="#2a4ba0" stroke-width="1.100" fill="none"/>
 <path d="M266.100 709.700v4.800M263.800 712.500l2.300 2.300 2.300-2.300" stroke="#2a4ba0" stroke-width="1.100" fill="none"/>
 <circle cx="1009.600" cy="714.600" r="4" stroke="#1e3c96" stroke-width="1.700" fill="none"/>
 <path d="M1012.600 717.700l4 4" stroke="#1e3c96" stroke-width="2.200" stroke-linecap="round" fill="none"/>
 <path d="M1360.500 710.700h15M1360.500 715.500h15M1360.500 720.400h7.500" stroke="#1e3c96" stroke-width="2" stroke-linecap="round" fill="none"/>
 <path d="M1429.800 709.800l-6 6 6 6" stroke="#8590c2" stroke-width="1.500" fill="none"/>
 <path d="M1474.700 709.800l6 6-6 6" stroke="#8590c2" stroke-width="1.500" fill="none"/>
</svg>
<div class="xls" style="left:102.300px;top:16.200px">XLS</div>
<div class="xls" style="left:132px;top:16.200px">XLS</div>
<div class="box" style="left:610px;top:6px;width:131px;height:21px"></div>
<div class="box" style="left:742px;top:6px;width:132px;height:21px;padding-left:2px;line-height:19px">All<svg class="ud" style="left:120px" viewBox="0 0 5 9"><path d="M2.500 0l2.500 3.600h-5zM2.500 9l2.500-3.600h-5z" fill="#333"/></svg></div>
<div class="box" style="left:1227px;top:6px;width:57px;padding-left:23px">20<svg class="ud" style="left:46px" viewBox="0 0 5 9"><path d="M2.500 0l2.500 3.600h-5zM2.500 9l2.500-3.600h-5z" fill="#333"/></svg></div>
<div class="box" style="left:1306px;top:6px;width:37px;padding-left:6px">1<svg class="ud" style="left:25.5px" viewBox="0 0 5 9"><path d="M2.500 0l2.500 3.600h-5zM2.500 9l2.500-3.600h-5z" fill="#333"/></svg></div>
<div id="pg" style="left:1361.300px;top:10px">1-9 (9)</div>
</div>
 </div>
</div>
<div id="kml"><b>KML</b></div>
</body>
</html>
